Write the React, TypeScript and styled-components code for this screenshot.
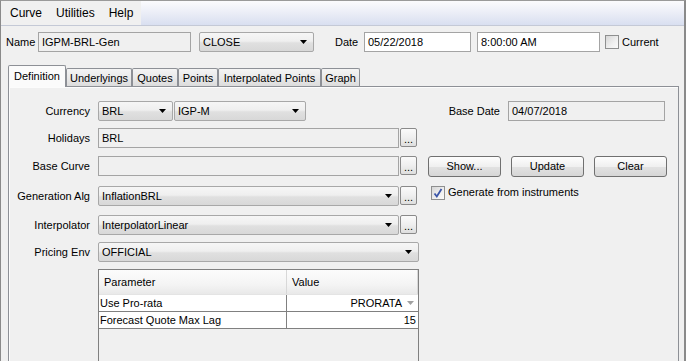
import React from "react";
import styled, { createGlobalStyle } from "styled-components";

const GlobalStyle = createGlobalStyle`
  html, body {
    margin: 0;
    padding: 0;
    background: #f0f0f0;
  }
  body {
    font-family: "Liberation Sans", Arial, sans-serif;
    font-size: 11px;
    color: #000;
  }
`;

interface WidthProps {
  $w: number;
}

function Arrow(props: { color?: string }): React.ReactElement {
  return (
    <svg width="7" height="4" viewBox="0 0 7 4">
      <path d="M0 0 H7 L3.5 4 Z" fill={props.color || "#000"} />
    </svg>
  );
}

function CheckBox(props: { checked?: boolean }): React.ReactElement {
  return (
    <CheckFrame>
      {props.checked && (
        <svg width="12" height="12" viewBox="0 0 12 12">
          <path
            d="M2.5 6.5 L4.8 9.5 L9.5 2"
            stroke="#3a55a8"
            strokeWidth="1.8"
            fill="none"
          />
        </svg>
      )}
    </CheckFrame>
  );
}

function Combo(props: { w: number; value: string }): React.ReactElement {
  return (
    <ComboBox $w={props.w}>
      <span>{props.value}</span>
      <Arrow />
    </ComboBox>
  );
}

const tabs = [
  { name: "Definition", w: 58 },
  { name: "Underlyings", w: 66 },
  { name: "Quotes", w: 46 },
  { name: "Points", w: 40 },
  { name: "Interpolated Points", w: 103 },
  { name: "Graph", w: 39 },
];

export default function App(): React.ReactElement {
  return (
    <Window>
      <GlobalStyle />
      <MenuBar>
        <MenuGroup>
          <MenuItem>Curve</MenuItem>
          <MenuItem>Utilities</MenuItem>
          <MenuItem>Help</MenuItem>
        </MenuGroup>
      </MenuBar>

      <TopRow>
        <TopLabel $w={32}>Name</TopLabel>
        <TextField $w={153}>IGPM-BRL-Gen</TextField>
        <Spacer $w={8} />
        <Combo w={115} value="CLOSE" />
        <Spacer $w={21} />
        <TopLabel $w={29}>Date</TopLabel>
        <TextField $w={107} $white>
          05/22/2018
        </TextField>
        <Spacer $w={6} />
        <TextField $w={123} $white>
          8:00:00 AM
        </TextField>
        <Spacer $w={5} />
        <CheckBox />
        <CheckText>Current</CheckText>
      </TopRow>

      <TabStrip>
        {tabs.map((t, i) => (
          <Tab key={t.name} $w={t.w} $active={i === 0}>
            {t.name}
          </Tab>
        ))}
      </TabStrip>

      <Panel>
        <Row $gap={7}>
          <Label>Currency</Label>
          <Combo w={75} value="BRL" />
          <Spacer $w={1} />
          <Combo w={132} value="IGP-M" />
          <RightGroup>
            <SideLabel>Base Date</SideLabel>
            <TextField $w={157}>04/07/2018</TextField>
          </RightGroup>
        </Row>

        <Row $gap={8}>
          <Label>Holidays</Label>
          <TextField $w={301}>BRL</TextField>
          <DotsButton>...</DotsButton>
        </Row>

        <Row $gap={10}>
          <Label>Base Curve</Label>
          <TextField $w={301} />
          <DotsButton>...</DotsButton>
          <Spacer $w={11} />
          <PushButton>Show...</PushButton>
          <Spacer $w={10} />
          <PushButton>Update</PushButton>
          <Spacer $w={10} />
          <PushButton>Clear</PushButton>
        </Row>

        <Row $gap={9}>
          <Label>Generation Alg</Label>
          <Combo w={301} value="InflationBRL" />
          <DotsButton>...</DotsButton>
          <Spacer $w={14} />
          <CheckBox checked />
          <CheckText>Generate from instruments</CheckText>
        </Row>

        <Row $gap={7}>
          <Label>Interpolator</Label>
          <Combo w={301} value="InterpolatorLinear" />
          <DotsButton>...</DotsButton>
        </Row>

        <Row $gap={7}>
          <Label>Pricing Env</Label>
          <Combo w={321} value="OFFICIAL" />
        </Row>

        <Table>
          <HeaderRow>
            <HeaderCell>Parameter</HeaderCell>
            <HeaderCell>Value</HeaderCell>
          </HeaderRow>
          <DataRow>
            <Cell>Use Pro-rata</Cell>
            <Cell $right>
              PRORATA
              <ValueArrow>
                <Arrow color="#a0a0a0" />
              </ValueArrow>
            </Cell>
          </DataRow>
          <DataRow>
            <Cell>Forecast Quote Max Lag</Cell>
            <Cell $right>15</Cell>
          </DataRow>
        </Table>
      </Panel>
    </Window>
  );
}

const Window = styled.div`
  width: 686px;
  height: 361px;
  box-sizing: border-box;
  border-top: 1px solid #9a9a9a;
  border-left: 1px solid #8a8a8a;
  border-right: 2px solid #8a8a8a;
  background: #f0f0f0;
  overflow: hidden;
`;

const MenuBar = styled.div`
  height: 24px;
  display: flex;
  background: linear-gradient(#fbfbfd 0%, #eef0f8 40%, #d9dff0 100%);
  border-bottom: 1px solid #c4c9d6;
`;

const MenuGroup = styled.div`
  width: 138px;
  display: flex;
  align-items: center;
  padding-left: 2px;
  background: #f0f0f0;
  font-size: 12px;
`;

const MenuItem = styled.span`
  padding: 0 7px;
`;

const TopRow = styled.div`
  display: flex;
  align-items: center;
  height: 20px;
  margin-top: 6px;
  padding-left: 5px;
`;

const TopLabel = styled.span<WidthProps>`
  width: ${(p) => p.$w}px;
`;

const Spacer = styled.span<WidthProps>`
  width: ${(p) => p.$w}px;
  flex-shrink: 0;
`;

const TextField = styled.div<WidthProps & { $white?: boolean }>`
  width: ${(p) => p.$w}px;
  height: 20px;
  box-sizing: border-box;
  flex-shrink: 0;
  border: 1px solid #a4a4a4;
  background: ${(p) => (p.$white ? "#fff" : "#f0f0f0")};
  padding-left: 3px;
  line-height: 18px;
  white-space: nowrap;
`;

const ComboBox = styled.div<WidthProps>`
  width: ${(p) => p.$w}px;
  height: 20px;
  box-sizing: border-box;
  flex-shrink: 0;
  display: flex;
  align-items: center;
  justify-content: space-between;
  padding: 0 6px 0 3px;
  border: 1px solid #a8a8a8;
  border-radius: 2px;
  background: linear-gradient(#f6f6f6 0%, #efefef 45%, #e0e0e0 55%, #d8d8d8 100%);
`;

const CheckFrame = styled.div`
  width: 14px;
  height: 14px;
  box-sizing: border-box;
  flex-shrink: 0;
  display: flex;
  align-items: center;
  justify-content: center;
  border: 1px solid #8e8f8f;
  background: linear-gradient(135deg, #d6d6d6 0%, #f0f0f0 60%, #fafafa 100%);
`;

const CheckText = styled.span`
  margin-left: 3px;
  white-space: nowrap;
`;

const TabStrip = styled.div`
  display: flex;
  align-items: flex-end;
  height: 21px;
  margin: 13px 0 0 7px;
`;

const Tab = styled.div<WidthProps & { $active?: boolean }>`
  position: relative;
  width: ${(p) => p.$w}px;
  height: ${(p) => (p.$active ? 22 : 18)}px;
  margin-bottom: ${(p) => (p.$active ? -1 : 0)}px;
  z-index: ${(p) => (p.$active ? 1 : 0)};
  box-sizing: border-box;
  border: 1px solid #8d9096;
  border-bottom: none;
  border-radius: 2px 2px 0 0;
  background: ${(p) =>
    p.$active ? "#fbfbfb" : "linear-gradient(#f4f4f4 0%, #eaeaea 50%, #dcdcdc 100%)"};
  display: flex;
  align-items: ${(p) => (p.$active ? "flex-start" : "center")};
  justify-content: center;
  padding-top: ${(p) => (p.$active ? 4 : 0)}px;
  white-space: nowrap;
`;

const Panel = styled.div`
  width: 671px;
  height: 290px;
  box-sizing: border-box;
  margin-left: 7px;
  padding: 14px 13px 0 0;
  border: 1px solid #8d9096;
  box-shadow: inset 1px 1px 0 #fcfcfc;
  background: #f0f0f0;
`;

const Row = styled.div<{ $gap: number }>`
  display: flex;
  align-items: flex-start;
  height: 20px;
  margin-bottom: ${(p) => p.$gap}px;
`;

const Label = styled.div`
  width: 81px;
  margin-right: 8px;
  flex-shrink: 0;
  text-align: right;
  line-height: 20px;
  white-space: nowrap;
`;

const SideLabel = styled.span`
  margin-right: 8px;
  line-height: 20px;
  white-space: nowrap;
`;

const RightGroup = styled.div`
  margin-left: auto;
  display: flex;
  align-items: flex-start;
`;

const DotsButton = styled.div`
  width: 17px;
  height: 19px;
  box-sizing: border-box;
  flex-shrink: 0;
  margin-left: 1px;
  border: 1px solid #8a8a8a;
  border-radius: 2px;
  background: linear-gradient(#fafafa 0%, #efefef 50%, #dedede 100%);
  text-align: center;
  line-height: 21px;
  font-size: 11px;
`;

const PushButton = styled.div`
  width: 73px;
  height: 21px;
  box-sizing: border-box;
  flex-shrink: 0;
  border: 1px solid #707070;
  border-radius: 3px;
  background: linear-gradient(#fdfdfd 0%, #f0f0f0 50%, #e2e2e2 52%, #d6d6d6 100%);
  text-align: center;
  line-height: 19px;
`;

const Table = styled.div`
  width: 321px;
  height: 120px;
  box-sizing: border-box;
  margin-left: 89px;
  border: 1px solid #808080;
  background: #f0f0f0;
`;

const HeaderRow = styled.div`
  display: grid;
  grid-template-columns: 188px 1fr;
  height: 24px;
  border-bottom: 1px solid #e4e4e4;
`;

const HeaderCell = styled.div`
  padding-left: 5px;
  line-height: 24px;
  background: linear-gradient(#fcfcfc 0%, #f4f4f4 60%, #e9e9e9 100%);
  border-right: 1px solid #d8d8d8;
`;

const DataRow = styled.div`
  display: grid;
  grid-template-columns: 188px 1fr;
  height: 16px;
  border-bottom: 1px solid #808080;
  background: #fff;
`;

const Cell = styled.div<{ $right?: boolean }>`
  display: flex;
  align-items: center;
  justify-content: ${(p) => (p.$right ? "flex-end" : "flex-start")};
  padding: 0 2px 0 1px;
  border-right: 1px solid #808080;
  white-space: nowrap;

  &:last-child {
    border-right: none;
  }
`;

const ValueArrow = styled.span`
  display: inline-flex;
  margin: 0 2px 0 5px;
`;
